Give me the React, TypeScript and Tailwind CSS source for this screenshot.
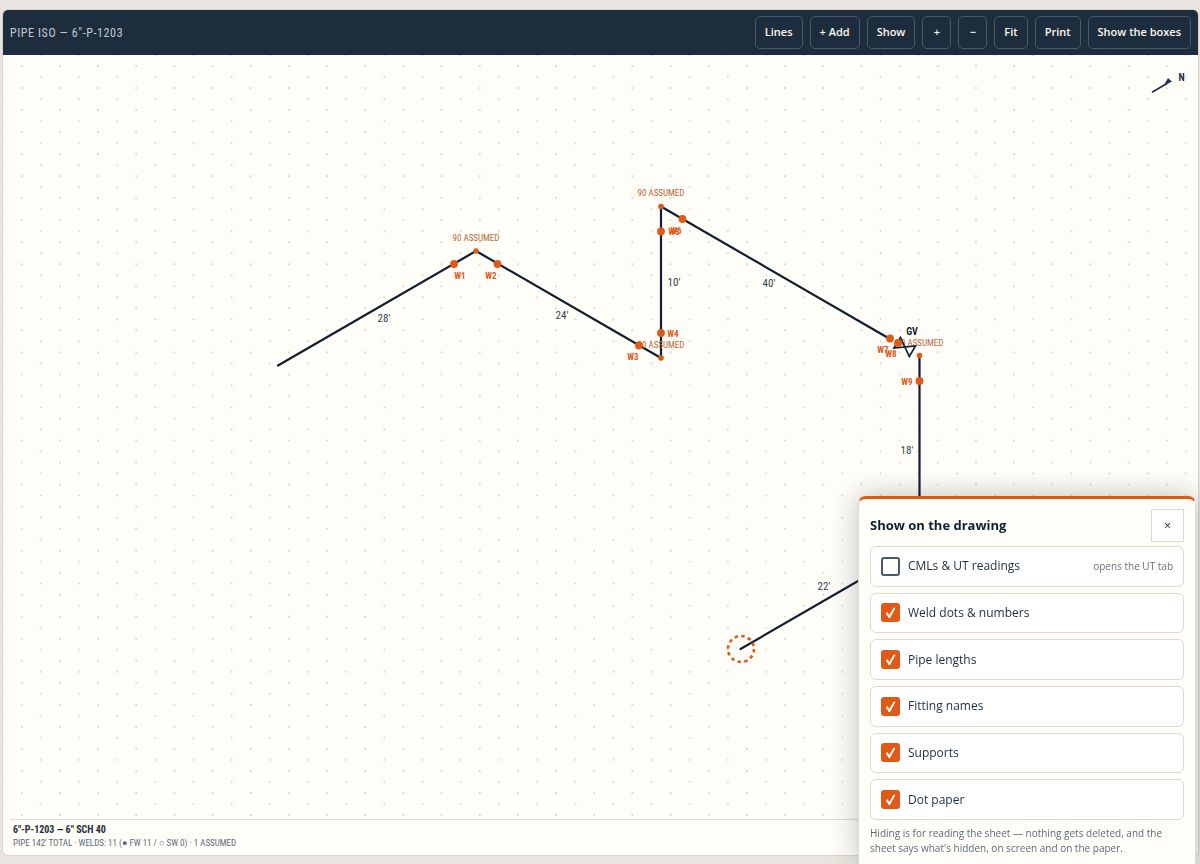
import { useState } from "react";

const tools = [
  { label: "Lines" },
  { label: "+ Add" },
  { label: "Show" },
  { label: "+", name: "Zoom in" },
  { label: "−", name: "Zoom out" },
  { label: "Fit" },
  { label: "Print" },
  { label: "Show the boxes" },
];

const layers = [
  { id: "cml", label: "CMLs & UT readings", note: "opens the UT tab", on: false },
  { id: "welds", label: "Weld dots & numbers", on: true },
  { id: "lengths", label: "Pipe lengths", on: true },
  { id: "fittings", label: "Fitting names", on: true },
  { id: "supports", label: "Supports", on: true },
  { id: "dots", label: "Dot paper", on: true },
];

const assumed = [
  { x: 476, y: 241 },
  { x: 661, y: 348 },
  { x: 661, y: 196 },
  { x: 920, y: 346 },
];

const elbows = [
  { x: 476, y: 251 },
  { x: 661, y: 358 },
  { x: 661, y: 206.5 },
  { x: 919.5, y: 355.5 },
];

const welds = [
  { n: "W1", x: 454, y: 264, tx: 460, ty: 279 },
  { n: "W2", x: 497.5, y: 264, tx: 491, ty: 279 },
  { n: "W3", x: 639, y: 345.5, tx: 633, ty: 360 },
  { n: "W4", x: 661, y: 333, tx: 673, ty: 337 },
  { n: "W5", x: 661, y: 231.5, tx: 674, ty: 235 },
  { n: "W6", x: 682.5, y: 219, tx: 676, ty: 234 },
  { n: "W7", x: 890, y: 338.5, tx: 883, ty: 353 },
  { n: "W8", x: 898, y: 343, tx: 891, ty: 357 },
  { n: "W9", x: 919.5, y: 381, tx: 907, ty: 385 },
];

const lengths = [
  { t: "28'", x: 384, y: 322 },
  { t: "24'", x: 562, y: 319 },
  { t: "10'", x: 674, y: 286 },
  { t: "40'", x: 769, y: 287 },
  { t: "18'", x: 907, y: 454 },
  { t: "22'", x: 824, y: 590 },
];

function Drawing() {
  return (
    <svg
      className="block w-full font-['Roboto_Condensed','Roboto',sans-serif]"
      role="img"
      aria-label="Pipe isometric"
    >
      <defs>
        <pattern id="dotPaper" x="18.7" y="11" width="38.17" height="22.03" patternUnits="userSpaceOnUse">
          <rect x="-0.8" y="-0.8" width="1.6" height="1.6" fill="#cbc8c0" />
          <rect x="37.37" y="-0.8" width="1.6" height="1.6" fill="#cbc8c0" />
          <rect x="-0.8" y="21.23" width="1.6" height="1.6" fill="#cbc8c0" />
          <rect x="37.37" y="21.23" width="1.6" height="1.6" fill="#cbc8c0" />
          <rect x="18.3" y="10.2" width="1.6" height="1.6" fill="#cbc8c0" />
        </pattern>
      </defs>
      <rect width="100%" height="100%" fill="url(#dotPaper)" />
      <g transform="translate(-3 -55)">
        <path
          d="M278 365.5 476 251 661 358V206.5L890 339M919.5 355.5V545.5L740.5 649"
          fill="none"
          stroke="#0f1f30"
          strokeWidth="2.2"
          strokeLinejoin="round"
          strokeLinecap="round"
        />
        <g fill="#b5683a" fontSize="9" textAnchor="middle">
          {assumed.map((a, i) => (
            <text key={i} x={a.x} y={a.y}>90 ASSUMED</text>
          ))}
        </g>
        <path d="M900.5 337.5 894 348 915.5 346 909.3 356.5Z" fill="none" stroke="#0f1f30" strokeWidth="1.7" />
        <text x="912" y="335" fontSize="10" fontWeight="700" fill="#0f1f30" textAnchor="middle">GV</text>
        <g fill="#e05a17">
          {elbows.map((e, i) => (
            <circle key={i} cx={e.x} cy={e.y} r="2.8" />
          ))}
          {welds.map((w) => (
            <g key={w.n}>
              <circle cx={w.x} cy={w.y} r="3.9" />
              <text x={w.tx} y={w.ty} fontSize="9" fontWeight="700" textAnchor="middle">{w.n}</text>
            </g>
          ))}
        </g>
        <g fill="#33414f" fontSize="11" textAnchor="middle">
          {lengths.map((l) => (
            <text key={l.t} x={l.x} y={l.y}>{l.t}</text>
          ))}
        </g>
        <circle cx="741" cy="649" r="13" fill="none" stroke="#e05a17" strokeWidth="2.6" strokeDasharray="3.4 3.4" />
        <path d="M1152 92.3 1167 83.5" stroke="#1e2d3d" strokeWidth="1.6" />
        <path d="M1168 78.5 1171.5 81.5 1164.5 85Z" fill="#1e2d3d" stroke="#1e2d3d" strokeWidth="0.6" />
        <text x="1181.5" y="81" fontSize="10" fontWeight="700" fill="#1e2d3d" textAnchor="middle">N</text>
      </g>
    </svg>
  );
}

export default function App() {
  const [shown, setShown] = useState<Record<string, boolean>>(
    Object.fromEntries(layers.map((l) => [l.id, l.on]))
  );

  return (
    <div className="flex min-h-screen flex-col bg-[#e9e5de] pt-[9px] pr-px pb-2 pl-0.5 font-['Open_Sans',sans-serif] text-[#1e2d3d]">
      <main className="flex flex-1 flex-col overflow-hidden rounded-md border border-[#d9d5cc] bg-[#fffdf8]">
        <header className="flex h-[45px] items-center justify-between bg-[#1e2d3d] px-[7px]">
          <h1 className="font-['Roboto_Condensed','Roboto',sans-serif] text-xs tracking-wider text-[#c3cad1]">
            PIPE ISO — 6"-P-1203
          </h1>
          <div className="flex gap-[7px]">
            {tools.map((t) => (
              <button
                key={t.label}
                type="button"
                aria-label={t.name}
                className="h-[33px] min-w-[29px] rounded-[5px] border border-[#4a5a6b] px-[9px] text-[11px] font-semibold text-[#fbf9f4]"
              >
                {t.label}
              </button>
            ))}
          </div>
        </header>
        <div className="flex flex-1">
          <Drawing />
        </div>
        <footer className="mx-[7px] h-9 border-t border-[#dedbd3] px-[3px] pt-1 font-['Roboto_Condensed','Roboto',sans-serif]">
          <p className="text-[10px] leading-3 font-bold text-[#1e2d3d]">6"-P-1203 — 6" SCH 40</p>
          <p className="text-[9px] leading-[14px] text-[#5d6b79]">
            PIPE 142' TOTAL · WELDS: 11 (● FW 11 / ○ SW 0) · 1 ASSUMED
          </p>
        </footer>
      </main>

      <section
        aria-labelledby="panelTitle"
        className="fixed right-1 bottom-0 w-[338px] rounded-t-lg border border-t-[3px] border-b-0 border-[#dedad1] border-t-[#e05a17] bg-[#fffdf8] px-[11px] pt-2.5 pb-2 shadow-[0_0_28px_rgba(15,31,48,0.28)]"
      >
        <div className="flex items-center justify-between">
          <h2 id="panelTitle" className="text-[13px] font-bold text-[#0f1f30]">Show on the drawing</h2>
          <button
            type="button"
            aria-label="Close"
            className="h-[33px] w-[33px] border border-[#dedad1] bg-white text-[13px]"
          >
            ×
          </button>
        </div>
        <div className="mt-1 grid h-[274px] auto-rows-fr gap-1.5">
          {layers.map((l) => (
            <label
              key={l.id}
              className="flex items-center gap-2 rounded-md border border-[#dedad1] bg-white px-2.5"
            >
              <span className="grid h-[19px] w-[19px] place-items-center">
                <input
                  type="checkbox"
                  checked={shown[l.id]}
                  onChange={(e) => setShown({ ...shown, [l.id]: e.target.checked })}
                  className="peer col-start-1 row-start-1 h-[19px] w-[19px] appearance-none rounded-[3px] border-2 border-[#4a5a6b] bg-white checked:border-[#e05a17] checked:bg-[#e05a17]"
                />
                <svg
                  viewBox="0 0 19 19"
                  className="pointer-events-none col-start-1 row-start-1 hidden h-[19px] w-[19px] peer-checked:block"
                  aria-hidden="true"
                >
                  <path d="M4.8 10.2 6.6 9.2 8.2 12 12.9 4.6 14.4 5.1 9 15H7.7Z" fill="#fff" />
                </svg>
              </span>
              <span className="text-[12px]">{l.label}</span>
              {l.note && <span className="ml-auto text-[10px] text-[#66747f]">{l.note}</span>}
            </label>
          ))}
        </div>
        <p className="mt-1.5 text-[10px] leading-[15px] text-[#5d6b79]">
          Hiding is for reading the sheet — nothing gets deleted, and the sheet says what's hidden, on screen and on the paper.
        </p>
      </section>
    </div>
  );
}
